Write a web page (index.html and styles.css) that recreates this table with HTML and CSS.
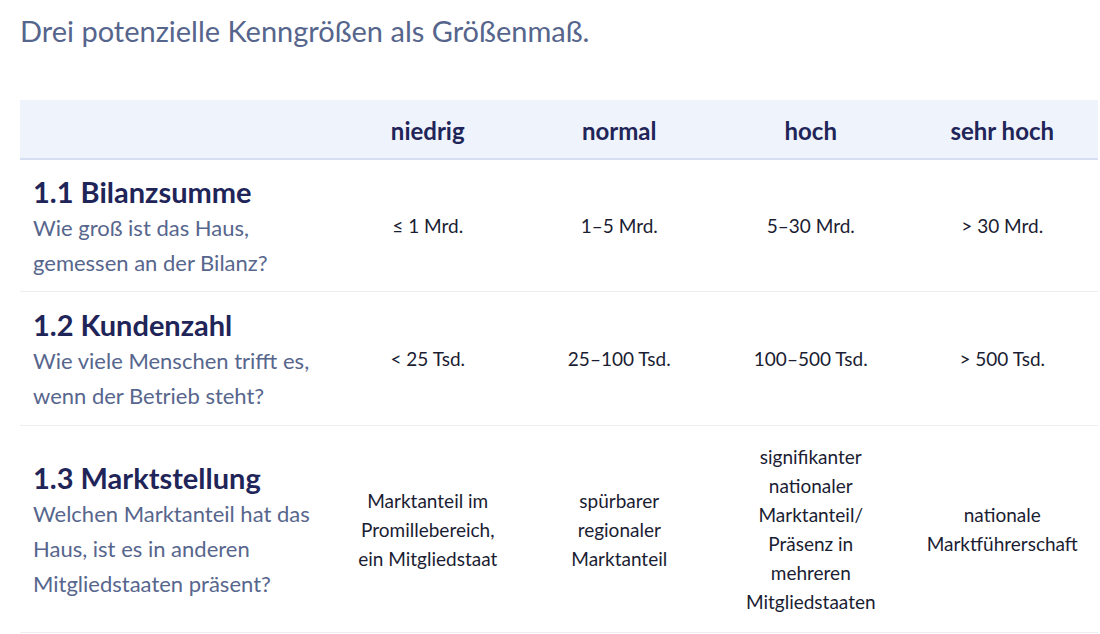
FILE: index.html
```html
<!DOCTYPE html>
<html lang="de">
<head>
<meta charset="utf-8">
<link rel="stylesheet" href="styles.css">
</head>
<body>
<h1 class="title">Drei potenzielle Kenngrößen als Größenmaß.</h1>
<table class="grid">
  <thead>
    <tr>
      <th class="label-col"></th>
      <th>niedrig</th>
      <th>normal</th>
      <th>hoch</th>
      <th>sehr hoch</th>
    </tr>
  </thead>
  <tbody>
    <tr class="r1">
      <td class="label-col">
        <div class="name">1.1 Bilanzsumme</div>
        <div class="q">Wie groß ist das Haus,<br>gemessen an der Bilanz?</div>
      </td>
      <td>≤ 1 Mrd.</td>
      <td>1–5 Mrd.</td>
      <td>5–30 Mrd.</td>
      <td>&gt; 30 Mrd.</td>
    </tr>
    <tr class="r2">
      <td class="label-col">
        <div class="name">1.2 Kundenzahl</div>
        <div class="q">Wie viele Menschen trifft es,<br>wenn der Betrieb steht?</div>
      </td>
      <td>&lt; 25 Tsd.</td>
      <td>25–100 Tsd.</td>
      <td>100–500 Tsd.</td>
      <td>&gt; 500 Tsd.</td>
    </tr>
    <tr class="r3">
      <td class="label-col">
        <div class="name">1.3 Marktstellung</div>
        <div class="q">Welchen Marktanteil hat das<br>Haus, ist es in anderen<br>Mitgliedstaaten präsent?</div>
      </td>
      <td>Marktanteil im<br>Promillebereich,<br>ein Mitgliedstaat</td>
      <td>spürbarer<br>regionaler<br>Marktanteil</td>
      <td>signifikanter<br>nationaler<br>Marktanteil/<br>Präsenz in<br>mehreren<br>Mitgliedstaaten</td>
      <td>nationale<br>Marktführerschaft</td>
    </tr>
  </tbody>
</table>
</body>
</html>
```
FILE: styles.css
```css
html, body {
  margin: 0;
  padding: 0;
  background: #ffffff;
}
body {
  padding: 0 2px 0 20px;
  font-family: Lato, "Noto Sans", sans-serif;
  color: #1b1d33;
}
.title {
  margin: 0;
  padding-top: 12px;
  height: 100px;
  box-sizing: border-box;
  font-size: 29px;
  font-weight: 400;
  color: #56658c;
  line-height: 38px;
}
.grid {
  width: 1078px;
  border-collapse: collapse;
  table-layout: fixed;
}
.grid th {
  background: #eff3fb;
  height: 56px;
  font-size: 24px;
  font-weight: 700;
  color: #1f2558;
  text-align: center;
  border-bottom: 2px solid #d6def2;
  padding: 2px 0 0 0;
}
.grid th.label-col, .grid td.label-col {
  width: 312px;
}
.grid td {
  text-align: center;
  vertical-align: middle;
  font-size: 19px;
  line-height: 29px;
  color: #1b1d33;
  border-bottom: 1px solid #eceef2;
  padding: 0;
}
.grid td.label-col {
  text-align: left;
  padding: 2px 0 0 13px;
}
.name {
  font-size: 29px;
  font-weight: 700;
  color: #1f2558;
  line-height: 36px;
}
.q {
  font-size: 22px;
  line-height: 35px;
  color: #57668d;
}
.r1 td.label-col { height: 129px; }
.r2 td.label-col { height: 131px; }
.r3 td.label-col { height: 204px; }
```
